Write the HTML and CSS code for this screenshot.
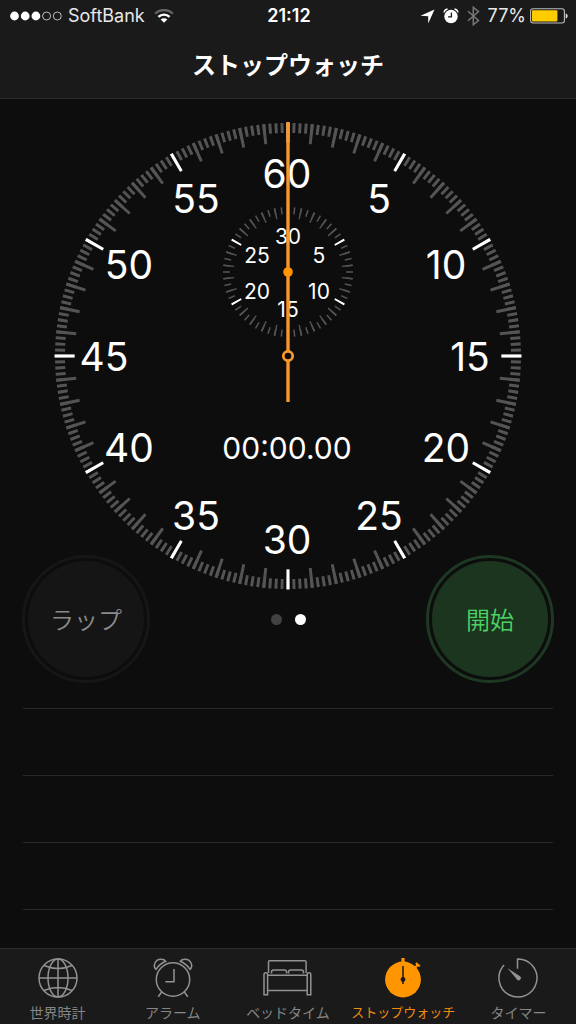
FILE: index.html
```html
<!DOCTYPE html>
<html lang="ja">
<head>
<meta charset="utf-8">
<meta name="viewport" content="width=device-width, initial-scale=1">
<title>ストップウォッチ</title>
<link rel="stylesheet" href="styles.css">
</head>
<body>
<div class="app">
  <header class="header">
    <div class="status">
      <div class="status-side">
        <svg class="signal" width="52" height="10" viewBox="0 0 52 10" aria-hidden="true">
          <g fill="#fff"><circle cx="4.5" cy="5" r="4.4"/><circle cx="15.2" cy="5" r="4.4"/><circle cx="25.9" cy="5" r="4.4"/></g>
          <g fill="none" stroke="#ccc" stroke-width=".9"><circle cx="36.6" cy="5" r="4"/><circle cx="47.3" cy="5" r="4"/></g>
        </svg>
        <span>SoftBank</span>
        <svg class="wifi" width="20" height="14" viewBox="0 0 20 14" fill="none" stroke="#fff" stroke-width="2.3" aria-hidden="true">
          <path d="M1.2 4.8a12.4 12.4 0 0 1 17.6 0" stroke="#666"/>
          <path d="M4.4 7.9a8 8 0 0 1 11.2 0"/>
          <path d="M10 13.8 6.7 10.6a4.7 4.7 0 0 1 6.6 0z" fill="#fff" stroke="none"/>
        </svg>
      </div>
      <time class="status-time">21:12</time>
      <div class="status-side status-right">
        <svg width="15" height="15" viewBox="0 0 15 15" fill="#fff" aria-hidden="true"><path d="M14.5.5 8.2 14.5V7.2L.5 6.7z"/></svg>
        <svg class="status-alarm" width="16" height="16" viewBox="0 0 16 16" aria-hidden="true">
          <circle cx="8" cy="8.5" r="6.7" fill="#fff"/>
          <path d="M1 4.5Q1.5 1.5 4.5 1M11.5 1Q14.5 1.5 15 4.5" fill="none" stroke="#fff" stroke-width="1.3"/>
          <path d="M8.4 4.4v4.5H5" fill="none" stroke="#1a1a1a" stroke-width="1.3"/>
        </svg>
        <svg width="13" height="20" viewBox="0 0 13 20" fill="none" stroke="#777" stroke-width="1.5" aria-hidden="true"><path d="M1 5.3 11.5 14.5 6.3 18.7V1.3L11.5 5.5 1 14.7"/></svg>
        <span>77%</span>
        <svg class="battery" width="38" height="16" viewBox="0 0 38 16" aria-hidden="true">
          <rect x=".6" y=".8" width="33.8" height="14.2" rx="2.5" fill="none" stroke="#bdbdbd" stroke-width="1.1"/>
          <rect x="2" y="2.3" width="25.4" height="11.2" rx="1" fill="#fc0"/>
          <path d="M35.7 5.2q2 1 2 2.8t-2 2.8z" fill="#ddd"/>
        </svg>
      </div>
    </div>
    <h1 class="title">ストップウォッチ</h1>
  </header>

  <main class="main">
    <svg class="dial" viewBox="0 0 468 468" role="img" aria-label="ストップウォッチ 00:00.00">
      <g fill="none" transform="rotate(-90 234 234)">
        <circle class="tick" cx="234" cy="234" r="228" stroke-width="10" pathLength="240" stroke-dasharray=".5 .5" stroke-dashoffset=".25"/>
        <circle class="tick" cx="234" cy="234" r="223" stroke-width="20" pathLength="600" stroke-dasharray="1.3 8.7" stroke-dashoffset=".65"/>
        <circle class="tick-main" cx="234" cy="234" r="223.5" stroke-width="20" pathLength="1200" stroke-dasharray="2.6 97.4" stroke-dashoffset="1.3"/>
      </g>
      <g fill="none" transform="rotate(-90 234 150)">
        <circle class="tick" cx="234" cy="150" r="61.5" stroke-width="7" pathLength="600" stroke-dasharray="2.4 7.6" stroke-dashoffset="1.2"/>
        <circle class="tick" cx="234" cy="150" r="59.5" stroke-width="11" pathLength="300" stroke-dasharray="1.2 8.8" stroke-dashoffset=".6"/>
        <circle class="tick-main" cx="234" cy="150" r="59.5" stroke-width="11" pathLength="600" stroke-dasharray="3 97" stroke-dashoffset="1.5"/>
      </g>
      <g class="numbers">
        <text x="233" y="66">60</text><text x="325" y="91">5</text><text x="392" y="157">10</text>
        <text x="416" y="249">15</text><text x="392" y="340">20</text><text x="325" y="408">25</text>
        <text x="233" y="432">30</text><text x="142" y="408">35</text><text x="75" y="340">40</text>
        <text x="50" y="249">45</text><text x="75" y="157">50</text><text x="142" y="91">55</text>
      </g>
      <g class="numbers-small">
        <text x="234" y="122">30</text><text x="265" y="141">5</text><text x="265" y="177">10</text>
        <text x="234" y="195">15</text><text x="203" y="177">20</text><text x="203" y="141">25</text>
      </g>
      <text class="elapsed" x="233" y="337">00:00.00</text>
      <g class="hand">
        <path d="M234 0V229M234 239V280" fill="none" stroke-width="3.4"/>
        <circle cx="234" cy="234" r="4.7" fill="none" stroke-width="2.8"/>
        <circle class="hub" cx="234" cy="150" r="4.8"/>
      </g>
    </svg>

    <div class="controls">
      <button class="round lap" type="button">ラップ</button>
      <div class="pages" aria-hidden="true"><span class="dot"></span><span class="dot dot-on"></span></div>
      <button class="round start" type="button">開始</button>
    </div>

    <ul class="laps" aria-label="ラップ">
      <li></li><li></li><li></li><li></li>
    </ul>
  </main>

  <nav class="tabs">
    <a class="tab" href="#world">
      <svg class="tab-icon" viewBox="0 0 52 40" aria-hidden="true">
        <circle cx="26" cy="20" r="19"/><ellipse cx="26" cy="20" rx="10" ry="19"/>
        <path d="M26 1v38M7 20h38M12 7.5Q26 13.5 40 7.5M12 32.5Q26 26.5 40 32.5"/>
      </svg>
      <span>世界時計</span>
    </a>
    <a class="tab" href="#alarm">
      <svg class="tab-icon" viewBox="0 0 52 40" aria-hidden="true">
        <circle cx="26" cy="21.5" r="16.7"/>
        <path d="M27 11v12.7h-8.7M14.7 34 11.2 38.8M37.3 34 40.8 38.8"/>
        <path d="M9 11.4C5.5 8 8 1.2 14 1.2c2.5 0 4 .8 4.8 2.1C14.5 5 11.300 7.6 9 11.4zM43 11.4C46.5 8 44 1.2 38 1.2c-2.5 0-4 .8-4.8 2.1C37.5 5 40.7 7.6 43 11.4z"/>
      </svg>
      <span>アラーム</span>
    </a>
    <a class="tab" href="#bed">
      <svg class="tab-icon" viewBox="0 0 52 40" aria-hidden="true">
        <path d="M6.5 15V4q0-1.3 1.3-1.3h35q1.300 0 1.300 1.300v11M9.5 15.500v-1.500q0-2 2-2h11q2 0 2 2v1.500M26.500 15.500v-1.500q0-2 2-2h11q2 0 2 2v1.500M5.500 17.300h40M5.500 32.500h40"/>
        <path d="M2 16.500q0-1.800 1.800-1.800t1.800 1.800v20.300H2zM45.200 16.500q0-1.800 1.800-1.800t1.800 1.800v20.300h-3.600z"/>
      </svg>
      <span>ベッドタイム</span>
    </a>
    <a class="tab tab-active" href="#stopwatch" aria-current="page">
      <svg class="tab-icon" viewBox="0 0 52 40" aria-hidden="true">
        <g fill="#ff9500" stroke="none"><circle cx="26" cy="21.5" r="17.9"/><path d="M24.4 0h3.2v5h-3.200zM39.600 4.200l4 3.600-1.500 1.300-1.200-.8-1.500 1.700-1.700-1.500 1.500-1.600-.9-1.200z"/></g>
        <path d="M26 8v18" stroke="#1a1a1a"/><circle cx="26" cy="21.5" r="2.4" fill="#1a1a1a" stroke="none"/>
      </svg>
      <span>ストップウォッチ</span>
    </a>
    <a class="tab" href="#timer">
      <svg class="tab-icon" viewBox="0 0 52 40" aria-hidden="true">
        <path d="M25.500 10.700V1A19 19 0 1 1 12.100 7"/>
        <path d="M15.300 10 28 18.300a2.200 2.200 0 1 1-3 3.200z" fill="#929292" stroke="none"/>
      </svg>
      <span>タイマー</span>
    </a>
  </nav>
</div>
</body>
</html>
```
FILE: styles.css
```css
* {
  box-sizing: border-box;
}

body {
  margin: 0;
  background: #0d0d0d;
  color: #fff;
  font-family: Inter, "Noto Sans CJK JP", sans-serif;
}

.app {
  display: flex;
  flex-direction: column;
  min-height: 100vh;
}

svg {
  display: block;
  flex: none;
}

/* Header */
.header {
  background: #1a1a1a;
  border-bottom: 1px solid #2c2c2c;
  padding-bottom: 14px;
}

.status {
  display: grid;
  grid-template-columns: 1fr auto 1fr;
  align-items: center;
  height: 32px;
  padding: 0 8px 0 10px;
  font-size: 18px;
  line-height: 32px;
  color: #e8e8e8;
}

.status-side {
  display: flex;
  align-items: center;
  gap: 6px;
}

.status-right {
  justify-content: flex-end;
  gap: 8px;
}

.wifi {
  margin-left: 3px;
}

.battery {
  margin-left: -4px;
}

.status-time {
  font-weight: 600;
  color: #fff;
}

.title {
  margin: 0;
  padding-top: 16px;
  font-size: 24px;
  line-height: 36px;
  font-weight: 700;
  text-align: center;
}

/* Dial */
.main {
  flex: 1;
  padding-top: 23px;
}

.dial {
  width: calc(100% - 108px);
  margin: 0 auto;
  overflow: visible;
}

.tick {
  stroke: #545456;
}

.tick-main {
  stroke: #fff;
}

.dial text {
  fill: #fff;
  text-anchor: middle;
}

.numbers {
  font-size: 39px;
}

.numbers-small {
  font-size: 21px;
}

.dial .elapsed {
  font-size: 30px;
}

.hand {
  stroke: #f7982a;
}

.dial .hub {
  fill: #ff9500;
  stroke: none;
}

/* Controls */
.controls {
  position: relative;
  display: flex;
  align-items: center;
  justify-content: space-between;
  margin-top: -35px;
  padding: 0 22px;
}

.round {
  width: 128px;
  height: 128px;
  padding: 3px;
  border: 3px solid;
  border-radius: 50%;
  background-color: transparent;
  background-clip: content-box;
  font-family: "Noto Sans CJK JP", sans-serif;
  font-size: 24px;
  line-height: 32px;
  font-weight: 350;
}

.lap {
  border-color: #161616;
  background-image: radial-gradient(circle closest-side, #151515 98%, transparent);
  color: #8a8a8c;
}

.start {
  border-color: #1d3823;
  background-image: radial-gradient(circle closest-side, #1b351f 98%, transparent);
  color: #4cd264;
}

.pages {
  display: flex;
  gap: 13px;
}

.dot {
  width: 11px;
  height: 11px;
  border-radius: 50%;
  background: #424242;
}

.dot-on {
  background: #fff;
}

/* Lap rows */
.laps {
  margin: 25px 23px 0;
  padding: 0;
  list-style: none;
}

.laps li {
  height: 67px;
  border-top: 1px solid #282828;
}

.laps li:last-child {
  height: 37px;
}

/* Tab bar */
.tabs {
  display: grid;
  grid-template-columns: repeat(5, 1fr);
  height: 76px;
  background: #1a1a1a;
  border-top: 1px solid #2c2c2c;
}

.tab {
  display: flex;
  flex-direction: column;
  align-items: center;
  gap: 4px;
  padding-top: 9px;
  color: #858585;
  font-family: "Noto Sans CJK JP", sans-serif;
  font-size: 14px;
  line-height: 20px;
  text-decoration: none;
  white-space: nowrap;
}

.tab-active {
  color: #f08c0c;
  font-size: 13px;
}

.tab-icon {
  width: 52px;
  height: 40px;
  fill: none;
  stroke: #929292;
  stroke-width: 1.5px;
}
```
